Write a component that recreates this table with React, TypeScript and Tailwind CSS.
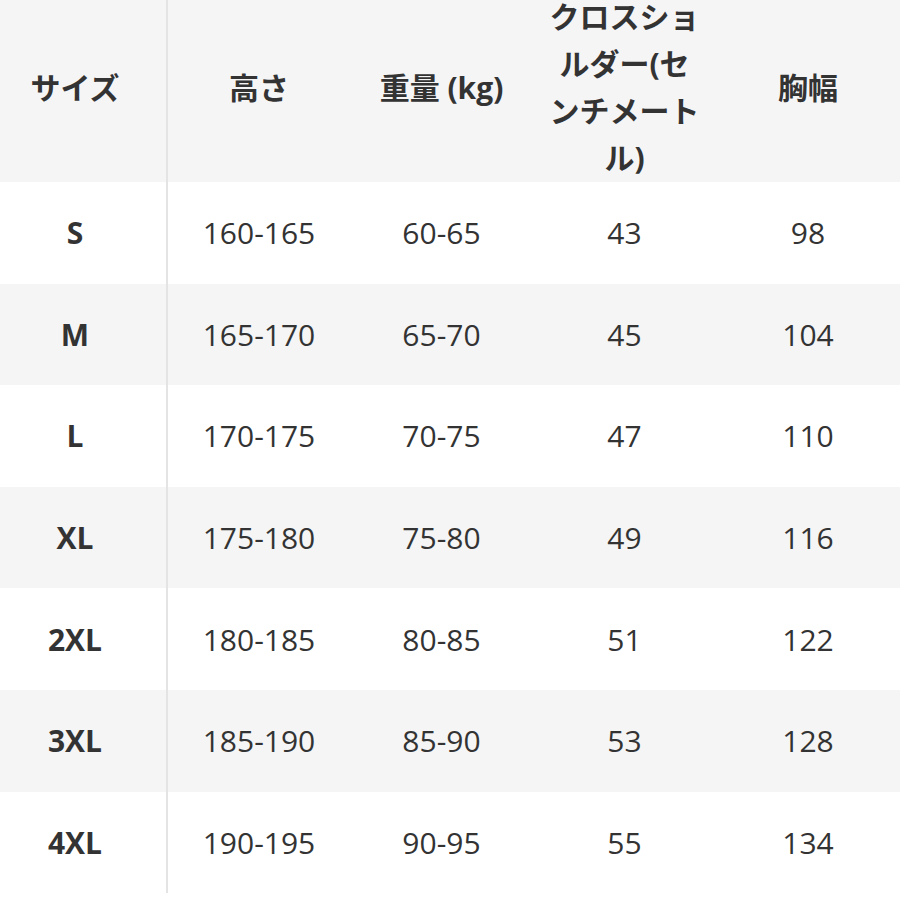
const headers = ['サイズ', '高さ', '重量 (kg)', 'クロスショルダー(センチメートル)', '胸幅'];

const rows = [
  ['S', '160-165', '60-65', '43', '98'],
  ['M', '165-170', '65-70', '45', '104'],
  ['L', '170-175', '70-75', '47', '110'],
  ['XL', '175-180', '75-80', '49', '116'],
  ['2XL', '180-185', '80-85', '51', '122'],
  ['3XL', '185-190', '85-90', '53', '128'],
  ['4XL', '190-195', '90-95', '55', '134'],
];

const font = { fontFamily: '"Open Sans", "Noto Sans CJK JP", sans-serif' };

export default function App() {
  return (
    <div className="w-[900px] h-[900px] bg-white text-[#333333]" style={font}>
      <div className="grid grid-cols-[168px_182px_183px_183px_184px]">
        {/* header */}
        {headers.map((h, i) => (
          <div
            key={h}
            className={
              'h-[182px] bg-[#f5f5f6] flex items-center justify-center text-center text-[30px] leading-[47px] font-bold px-[14px] pb-[8px] ' +
              (i === 0 ? 'border-r-2 border-[#e4e4e4] pr-[30px]' : '')
            }
          >
            {h}
          </div>
        ))}

        {/* body */}
        {rows.map((r, ri) =>
          r.map((c, ci) => (
            <div
              key={ri + '-' + ci}
              className={
                'h-[101.6px] flex items-center justify-center text-[30px] ' +
                (ri % 2 === 1 ? 'bg-[#f5f5f5] ' : 'bg-white ') +
                (ci === 0 ? 'font-bold border-r-2 border-[#e4e4e4] pr-[16px]' : 'font-normal')
              }
            >
              {c}
            </div>
          ))
        )}
      </div>
    </div>
  );
}
